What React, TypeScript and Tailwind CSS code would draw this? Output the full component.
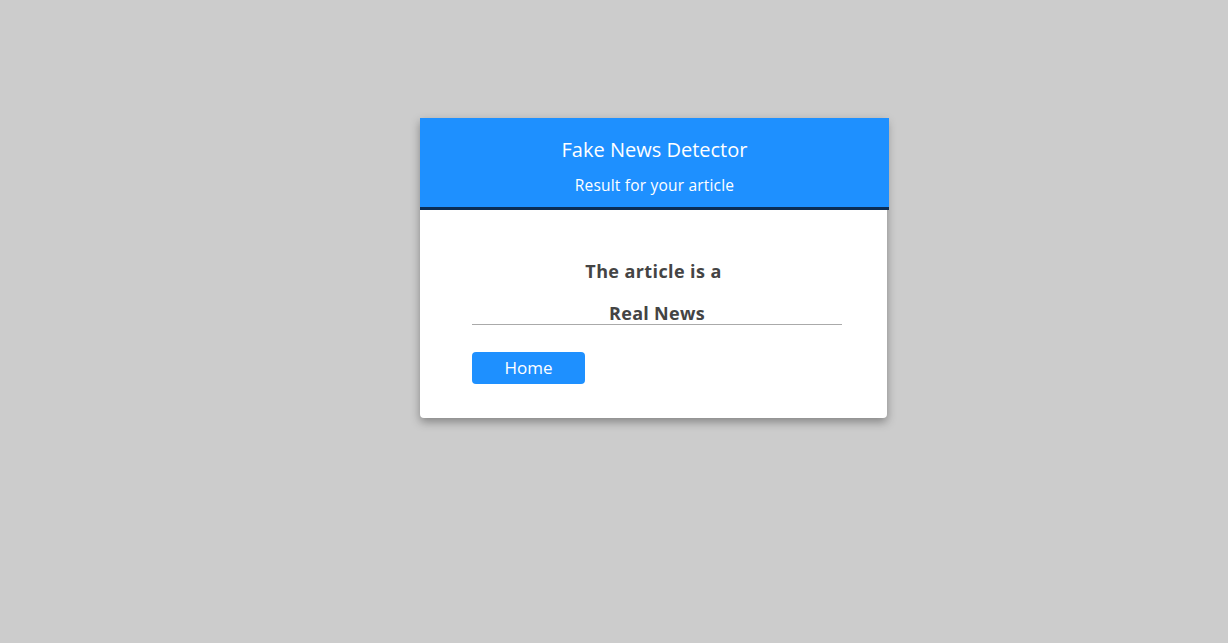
export default function App() {
  return (
    <div
      className="min-h-[643px] w-full bg-[#cccccc] pt-[118px] pl-[420px]"
      style={{ fontFamily: '"Open Sans", "Noto Sans", sans-serif' }}
    >
      <div className="w-[467px] rounded-b-[4px] bg-white shadow-[0_4px_10px_rgba(0,0,0,0.35)]">
        <div className="w-[469px] border-b-[3px] border-[#0b2d55] bg-[#1e90ff] pt-[17px] pb-[11px] text-center text-white">
          <h1 className="text-[20px] leading-[30px]">Fake News Detector</h1>
          <p className="mt-[9px] text-[15.5px] leading-[22px] tracking-[0.2px]">Result for your article</p>
        </div>
        <div className="px-[52px] pt-[48px] pb-[34px] text-[#444444]">
          <h2 className="text-center text-[18px] font-bold leading-[26px] tracking-[0.4px]">The article is a</h2>
          <div className="mt-[18px] w-[370px] border-b border-[#aaaaaa] text-center text-[18px] font-bold leading-[22px] tracking-[0.3px]">
            Real News
          </div>
          <button className="mt-[27px] h-[32px] w-[113px] rounded-[4px] bg-[#1e90ff] text-[17px] text-white">
            Home
          </button>
        </div>
      </div>
    </div>
  );
}
